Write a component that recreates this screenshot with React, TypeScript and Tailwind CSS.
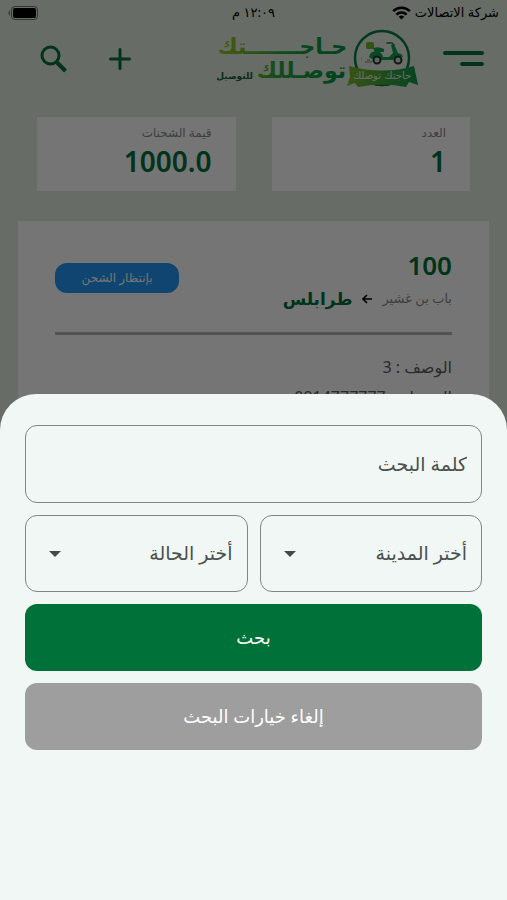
import { useState } from "react";

const cities = ["أختر المدينة", "طرابلس", "باب بن غشير"];
const statuses = ["أختر الحالة", "بإنتظار الشحن"];

function StatusBar() {
  return (
    <div className="grid grid-cols-3 items-center h-[26px] px-2 text-[13px] text-black">
      <div className="flex items-center gap-1 whitespace-nowrap">
        <span>شركة الاتصالات</span>
        <svg className="w-[19px] h-[14px] shrink-0" viewBox="0 0 19 14" fill="none" stroke="currentColor" strokeWidth="2.6">
          <path d="M1.2 5.2a11.8 11.8 0 0 1 16.6 0" />
          <path d="M4.4 8.6a7.3 7.3 0 0 1 10.2 0" />
          <path d="M9.5 13.6 6.7 10.8a4 4 0 0 1 5.6 0z" fill="currentColor" stroke="none" />
        </svg>
      </div>
      <span className="text-center">١٢:٠٩ م</span>
      <svg className="w-[30px] h-[14px] justify-self-end" viewBox="0 0 30 14">
        <rect x="3.5" y="0.5" width="26" height="13" rx="3.5" fill="none" stroke="#000" strokeOpacity="0.5" />
        <rect x="5" y="2" width="23" height="10" rx="2" fill="#000" />
        <path d="M2 4.5v5C0 9 0 5 2 4.5z" fill="#000" fillOpacity="0.5" />
      </svg>
    </div>
  );
}

function Logo() {
  return (
    <svg className="w-[202px] h-[62px]" viewBox="0 0 202 62" direction="rtl" role="img" aria-label="حاجتك توصللك للتوصيل">
      <defs>
        <linearGradient id="brand" gradientUnits="userSpaceOnUse" x1="0" y1="0" x2="132" y2="0">
          <stop offset="0" stopColor="#a5c61f" />
          <stop offset="0.5" stopColor="#25a23d" />
          <stop offset="1" stopColor="#008f45" />
        </linearGradient>
        <linearGradient id="ribbon" x1="0" y1="0" x2="1" y2="0">
          <stop offset="0" stopColor="#7cb82f" />
          <stop offset="1" stopColor="#0c9447" />
        </linearGradient>
      </defs>
      <g fill="url(#brand)" fontFamily="'DejaVu Sans', sans-serif" fontWeight="700">
        <text x="130" y="26" fontSize="22">حـاجـــــــتك</text>
        <text x="129" y="50" fontSize="22">توصـللك</text>
      </g>
      <text x="36" y="51" fontSize="9" fontWeight="700" fontFamily="'DejaVu Sans', sans-serif" fill="#15633a">للتوصيل</text>

      <circle cx="165" cy="30" r="27" fill="#e5efe3" stroke="#087c40" strokeWidth="2.5" />
      <path d="M146 48a27 27 0 0 0 38 0" fill="none" stroke="#0a7b40" strokeWidth="5" />
      {/* scooter */}
      <rect x="149" y="14" width="8" height="7" rx="2" fill="#6cb52d" />
      <path d="M156 20q6-2 11 1v3h-9z" fill="#10a04c" />
      <path d="M152 29q1-6 8-6 5 1 6 6h6l4-4-2-8 3-1 4 9q5 1 5 4-8-2-10 3h-11q-4-6-10-1z" fill="#10a04c" />
      <path d="M170 15h5l2 2" fill="none" stroke="#0c8a43" strokeWidth="1.5" strokeLinecap="round" />
      <circle cx="160" cy="32" r="3.5" fill="#cfdccf" stroke="#24362d" strokeWidth="2" />
      <circle cx="181" cy="32" r="3.5" fill="#cfdccf" stroke="#24362d" strokeWidth="2" />
      <path d="M148 34h7M150 32h3M144 31h1" stroke="#71867a" />
      <path d="M132 38q34 9 65 0l4 19-9-3-3 5q-24-5-48 0l-3-4-8 3 3-9z" fill="url(#ribbon)" />
      <text x="165" y="51" fontSize="10" textAnchor="middle" fontFamily="'DejaVu Sans', sans-serif" fill="#e5efe3">حاجتك توصلك</text>
    </svg>
  );
}

function Header() {
  return (
    <header className="flex items-center justify-between h-[66px] ps-[23px] pe-[39px] text-[#007139]">
      <div className="flex items-center gap-6">
        <button type="button" aria-label="القائمة">
          <svg className="w-[41px] h-[18px]" viewBox="0 0 41 18" stroke="currentColor" strokeWidth="4" strokeLinecap="round">
            <path d="M2 3h37M19 14h20" />
          </svg>
        </button>
        <Logo />
      </div>
      <div className="flex items-center gap-10">
        <button type="button" aria-label="إضافة">
          <svg className="w-6 h-6" viewBox="0 0 24 24" stroke="currentColor" strokeWidth="3" strokeLinecap="round">
            <path d="M13 2.5v19M3.5 12h19" />
          </svg>
        </button>
        <button type="button" aria-label="بحث">
          <svg className="w-7 h-7" viewBox="0 0 28 28" fill="none" stroke="currentColor" strokeWidth="3">
            <circle cx="11.5" cy="10.5" r="8.5" />
            <path d="m17.5 17 9 9" strokeWidth="4" />
          </svg>
        </button>
      </div>
    </header>
  );
}

function Stat({ label, value }: { label: string; value: string }) {
  return (
    <div className="flex-1 h-[74px] px-6 pt-2 bg-white">
      <p className="text-[12px] leading-4 text-[#8a8a8a]">{label}</p>
      <p className="text-[28px] leading-10 font-semibold text-[#007139]">{value}</p>
    </div>
  );
}

function Shipment() {
  return (
    <article className="mx-[18px] mt-[30px] px-[37px] pt-6 pb-10 bg-white">
      <div className="flex items-start justify-between">
        <div>
          <p className="text-[26px] leading-10 font-semibold text-[#007139]">100</p>
          <div className="flex items-center gap-[10px] h-7">
            <span className="text-[13px] text-[#8a8a8a]">باب بن غشير</span>
            <svg className="w-[10px] h-[10px]" viewBox="0 0 10 10" fill="none" stroke="#000" strokeWidth="1.6">
              <path d="M10 5H1M5 1 1 5l4 4" />
            </svg>
            <span className="text-[17px] font-bold text-[#007139]">طرابلس</span>
          </div>
        </div>
        <span className="flex items-center justify-center w-[124px] h-[30px] mt-[18px] rounded-xl bg-[#2196f3] text-[12px] text-white">
          بإنتظار الشحن
        </span>
      </div>
      <hr className="mt-[19px] border-t-[3px] border-[#b5b5b5]" />
      <p className="mt-[18px] text-[16px] leading-7 text-[#5c5c5c]">الوصف : 3</p>
      <p className="mt-[2px] text-[16px] leading-7 text-[#5c5c5c]">المستلم : 0914777777</p>
    </article>
  );
}

function Dropdown({ label, options }: { label: string; options: string[] }) {
  const [value, setValue] = useState(options[0]);

  return (
    <div className="relative flex-1">
      <select
        aria-label={label}
        value={value}
        onChange={(e) => setValue(e.target.value)}
        className="w-full h-[77px] ps-[14px] pe-12 appearance-none rounded-xl border border-[#808783] bg-transparent text-[19px] text-[#4c504e]"
      >
        {options.map((o) => (
          <option key={o}>{o}</option>
        ))}
      </select>
      <svg className="absolute left-6 top-9 w-3 h-[6px] pointer-events-none" viewBox="0 0 12 6" fill="#454a47">
        <path d="M0 0h12L6 6z" />
      </svg>
    </div>
  );
}

function SearchSheet() {
  return (
    <div className="fixed inset-0 flex flex-col justify-end bg-black/54">
      <form
        role="dialog"
        aria-label="خيارات البحث"
        onSubmit={(e) => e.preventDefault()}
        className="flex flex-col gap-3 px-[25px] pt-[31px] pb-[150px] rounded-t-[36px] bg-[#f1f7f4]"
      >
        <input
          type="text"
          aria-label="كلمة البحث"
          placeholder="كلمة البحث"
          className="w-full h-[78px] px-[14px] rounded-xl border border-[#808783] bg-transparent text-[19px] text-[#4c504e] placeholder:text-[#4c504e]"
        />
        <div className="flex gap-3">
          <Dropdown label="المدينة" options={cities} />
          <Dropdown label="الحالة" options={statuses} />
        </div>
        <button type="submit" className="h-[67px] rounded-xl bg-[#007139] text-[18px] text-white">
          بحث
        </button>
        <button type="reset" className="h-[67px] rounded-xl bg-[#9e9e9e] text-[18px] text-white">
          إلغاء خيارات البحث
        </button>
      </form>
    </div>
  );
}

export default function App() {
  return (
    <div dir="rtl" className="h-screen overflow-hidden bg-[#e0ebde] font-['Noto_Sans','DejaVu_Sans',sans-serif]">
      <StatusBar />
      <Header />
      <div className="flex gap-9 px-[37px] pt-[25px]">
        <Stat label="العدد" value="1" />
        <Stat label="قيمة الشحنات" value="1000.0" />
      </div>
      <Shipment />
      <SearchSheet />
    </div>
  );
}
